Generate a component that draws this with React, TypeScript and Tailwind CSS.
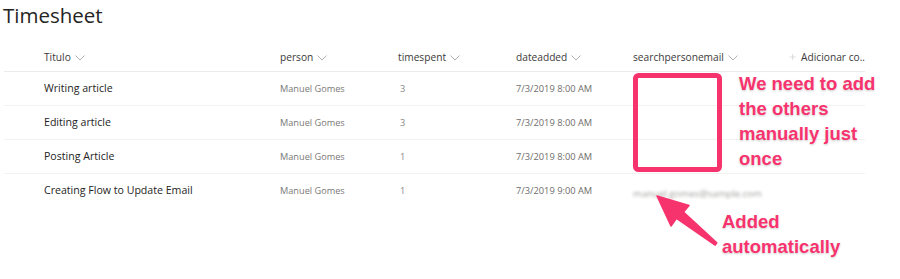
import { Plus } from "lucide-react";

type Row = {
  title: string;
  person: string;
  spent: string;
  date: string;
  email?: string;
};

const rows: Row[] = [
  { title: "Writing article", person: "Manuel Gomes", spent: "3", date: "7/3/2019 8:00 AM" },
  { title: "Editing article", person: "Manuel Gomes", spent: "3", date: "7/3/2019 8:00 AM" },
  { title: "Posting Article", person: "Manuel Gomes", spent: "1", date: "7/3/2019 8:00 AM" },
  {
    title: "Creating Flow to Update Email",
    person: "Manuel Gomes",
    spent: "1",
    date: "7/3/2019 9:00 AM",
    email: "manuel.gomes@sample.com",
  },
];

const grid = "grid grid-cols-[276px_118px_118px_117px_157px_75px]";

function Chevron() {
  return (
    <svg width="10" height="6" viewBox="0 0 10 6" className="ml-[4px] mt-[1px]">
      <polyline points="0.5,0.5 5,5 9.5,0.5" fill="none" stroke="#b3b0ad" strokeWidth="1" />
    </svg>
  );
}

function HeaderCell({ label, className = "" }: { label: string; className?: string }) {
  return (
    <div className={`flex items-center ${className}`}>
      <span>{label}</span>
      <Chevron />
    </div>
  );
}

export default function App() {
  return (
    <div className="relative w-[900px] h-[279px] bg-white overflow-hidden font-['Open_Sans',sans-serif]">
      <h1 className="pl-[3px] text-[20.5px] leading-[30px] text-[#252423]">Timesheet</h1>

      <div className="mt-[14px] ml-[4px] w-[861px]">
        <div className={`${grid} h-[28px] items-center border-b border-[#edebe9] text-[10.2px] text-[#3b3a39]`}>
          <HeaderCell label="Titulo" className="pl-[40px]" />
          <HeaderCell label="person" />
          <HeaderCell label="timespent" />
          <HeaderCell label="dateadded" />
          <HeaderCell label="searchpersonemail" />
          <div className="flex items-center -ml-[2px] whitespace-nowrap">
            <Plus size={10} strokeWidth={1.5} className="text-[#c8c6c4]" />
            <span className="ml-[4px]">Adicionar co..</span>
          </div>
        </div>

        {rows.map((r, i) => (
          <div
            key={r.title}
            className={`${grid} h-[34px] items-center ${i < rows.length - 1 ? "border-b border-[#f3f2f1]" : ""}`}
          >
            <div className="pl-[40px] text-[10.6px] text-[#252423]">{r.title}</div>
            <div className="text-[9.2px] text-[#7a7876]">{r.person}</div>
            <div className="pl-[2px] text-[9.2px] text-[#8a8886]">{r.spent}</div>
            <div className="text-[9.3px] text-[#6f6d6b]">{r.date}</div>
            <div>
              {r.email && (
                <span className="inline-block text-[9.6px] text-[#a19f9d] blur-[1.4px]">{r.email}</span>
              )}
            </div>
            <div />
          </div>
        ))}
      </div>

      <svg className="absolute left-0 top-0" width="900" height="279" viewBox="0 0 900 279">
        <rect x="635.5" y="75.5" width="84" height="94" rx="3" fill="none" stroke="#f7336e" strokeWidth="5" />
        <polygon
          points="657,196 689,205.5 683.5,212 716.8,242.8 715.2,245.2 676.5,218.3 671,226"
          fill="#f7336e"
          stroke="#f7336e"
          strokeWidth="1.5"
          strokeLinejoin="round"
        />
      </svg>

      <div className="absolute left-[739px] top-[71px] font-['Liberation_Sans',Arial,sans-serif] font-bold text-[18.5px] leading-[25px] text-[#f7336e] [text-shadow:0_0_2px_#fff,0_1px_2px_rgba(0,0,0,0.25)]">
        <div>We need to add</div>
        <div>the others</div>
        <div>manually just</div>
        <div>once</div>
      </div>

      <div className="absolute left-[722px] top-[209px] font-['Liberation_Sans',Arial,sans-serif] font-bold text-[18.5px] leading-[25px] text-[#f7336e] [text-shadow:0_0_2px_#fff,0_1px_2px_rgba(0,0,0,0.25)]">
        <div>Added</div>
        <div>automatically</div>
      </div>
    </div>
  );
}
